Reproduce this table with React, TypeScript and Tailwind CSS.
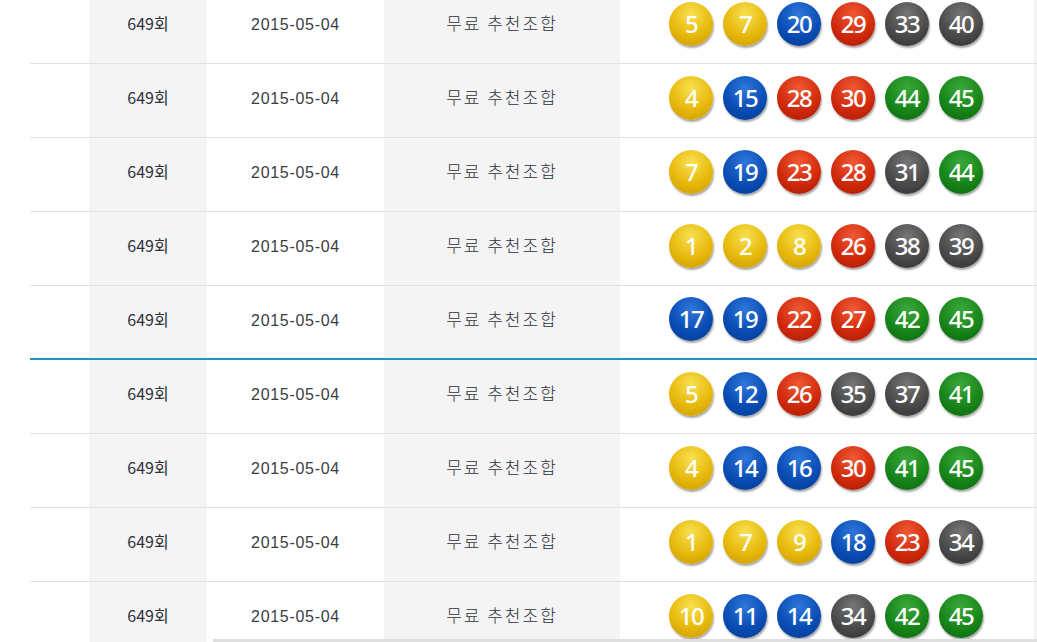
import React from 'react';

const rows: number[][] = [
    [5, 7, 20, 29, 33, 40],
    [4, 15, 28, 30, 44, 45],
    [7, 19, 23, 28, 31, 44],
    [1, 2, 8, 26, 38, 39],
    [17, 19, 22, 27, 42, 45],
    [5, 12, 26, 35, 37, 41],
    [4, 14, 16, 30, 41, 45],
    [1, 7, 9, 18, 23, 34],
    [10, 11, 14, 34, 42, 45],
];

// lotto colour bands: 1-10 yellow, 11-20 blue, 21-30 red, 31-40 gray, 41-45 green
function ballClass(n: number) {
    if (n <= 10) return 'bg-[radial-gradient(circle_at_50%_28%,#f8e050_0%,#e7b90c_55%,#c99800_100%)]';
    if (n <= 20) return 'bg-[radial-gradient(circle_at_50%_28%,#2f78dc_0%,#0a4db5_55%,#033a92_100%)]';
    if (n <= 30) return 'bg-[radial-gradient(circle_at_50%_28%,#f05a36_0%,#d12a0c_55%,#a81a04_100%)]';
    if (n <= 40) return 'bg-[radial-gradient(circle_at_50%_28%,#767676_0%,#4b4b4b_55%,#303030_100%)]';
    return 'bg-[radial-gradient(circle_at_50%_28%,#3aa83a_0%,#18861a_55%,#0b650e_100%)]';
}

function Ball({ n }: { n: number }) {
    return (
        <div
            className={`w-[44px] h-[44px] rounded-full flex items-center justify-center text-white text-[24px] font-medium tracking-[-1.5px] leading-none shadow-[1px_2px_2px_rgba(0,0,0,0.35)] ${ballClass(n)}`}
            style={{ fontFamily: '"Noto Sans", sans-serif' }}
        >
            {n}
        </div>
    );
}

export default function App() {
    return (
        <div className="w-[1037px] h-[642px] overflow-hidden bg-white relative" style={{ fontFamily: '"Noto Sans CJK KR", "Noto Sans", sans-serif' }}>
            <div className="-mt-[10px] pl-[30px]">
                {rows.map((balls, i) => (
                    <div
                        key={i}
                        className={`flex h-[74px] text-[#2d313b] ${i === 4 ? 'border-b-2 border-[#1e96b8]' : 'border-b border-[#e8e0d6]'}`}
                    >
                        <div className="w-[59px]" />
                        <div className="w-[118px] bg-[#f4f4f4] flex items-center justify-center pb-[7px] text-[16px]">649회</div>
                        <div className="w-[177px] flex items-center justify-center pb-[3px] text-[16px] tracking-[0.7px] text-[#3a3d45]" style={{ fontFamily: '"Liberation Sans", sans-serif' }}>
                            2015-05-04
                        </div>
                        <div className="w-[236px] bg-[#f4f4f4] flex items-center justify-center pb-[7px] text-[17px] tracking-[2px] font-light">무료 추천조합</div>
                        <div className="w-[414px] flex items-center gap-[10px] pl-[49px] pb-[6px]">
                            {balls.map((n, j) => (
                                <Ball key={j} n={n} />
                            ))}
                        </div>
                        <div className="flex-1 bg-[#f4f4f4]" />
                    </div>
                ))}
            </div>
            {/* bottom scroll edge */}
            <div className="absolute left-[213px] right-0 bottom-0 h-[3px] bg-[#dedede]" />
        </div>
    );
}
